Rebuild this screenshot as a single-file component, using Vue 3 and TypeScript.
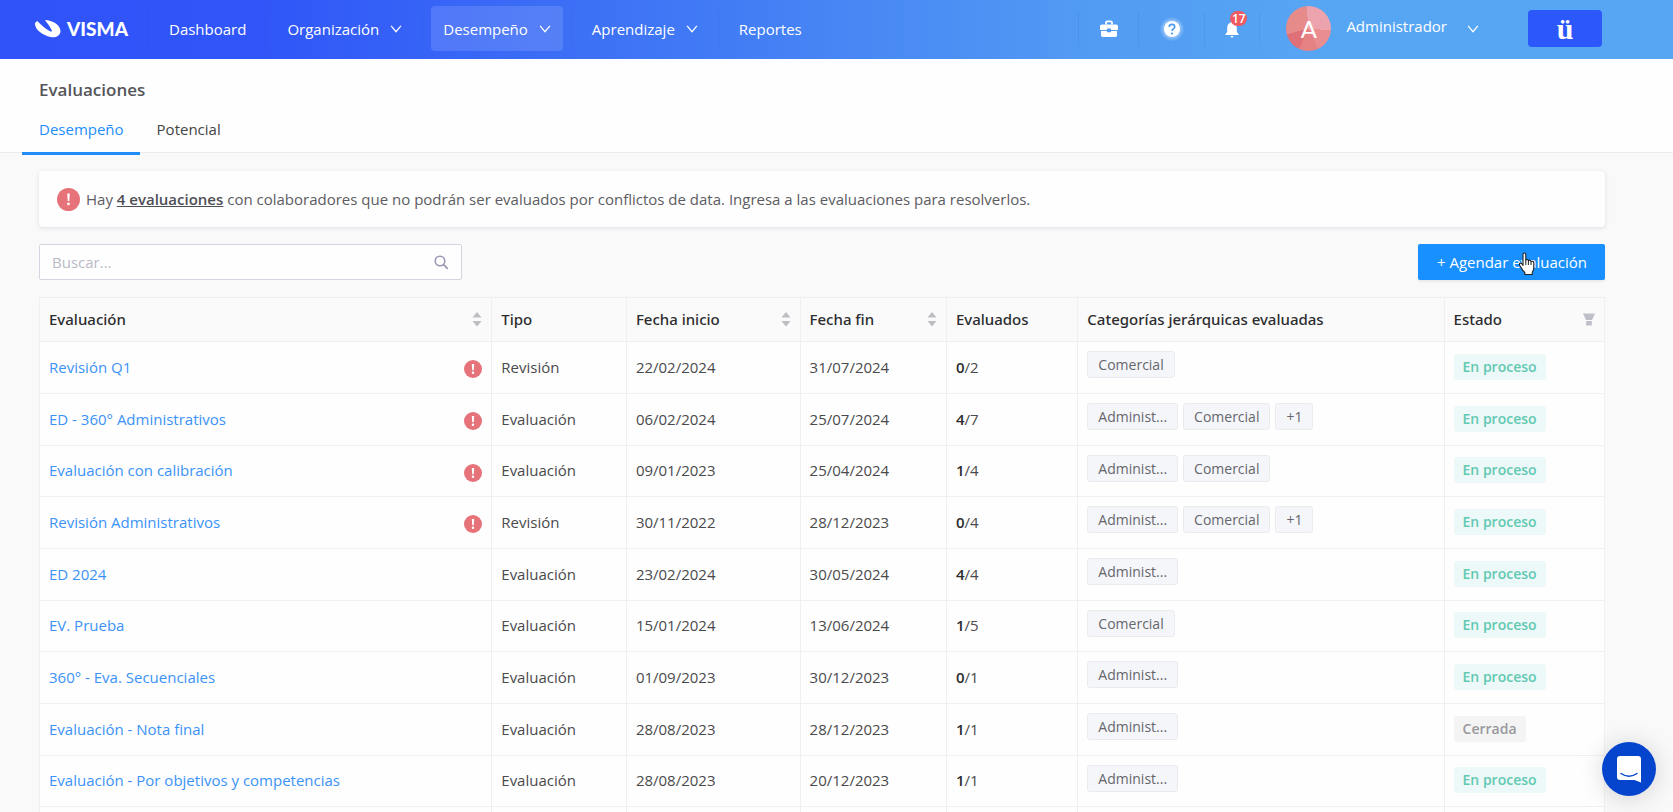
<script setup lang="ts">
import { ref } from 'vue'

interface NavItem { label: string; menu: boolean; active?: boolean }
interface Row {
  name: string
  alert: boolean
  kind: string
  start: string
  end: string
  done: number
  total: number
  tags: string[]
  open: boolean
}

const navItems: NavItem[] = [
  { label: 'Dashboard', menu: false },
  { label: 'Organización', menu: true },
  { label: 'Desempeño', menu: true, active: true },
  { label: 'Aprendizaje', menu: true },
  { label: 'Reportes', menu: false },
]

const columns = [
  { label: 'Evaluación', key: 'name', sort: true, filter: false },
  { label: 'Tipo', key: 'kind', sort: false, filter: false },
  { label: 'Fecha inicio', key: 'start', sort: true, filter: false },
  { label: 'Fecha fin', key: 'end', sort: true, filter: false },
  { label: 'Evaluados', key: 'count', sort: false, filter: false },
  { label: 'Categorías jerárquicas evaluadas', key: 'tags', sort: false, filter: false },
  { label: 'Estado', key: 'state', sort: false, filter: true },
]

const A = 'Administ...'
const C = 'Comercial'
const rows: Row[] = [
  { name: 'Revisión Q1', alert: true, kind: 'Revisión', start: '22/02/2024', end: '31/07/2024', done: 0, total: 2, tags: [C], open: true },
  { name: 'ED - 360° Administrativos', alert: true, kind: 'Evaluación', start: '06/02/2024', end: '25/07/2024', done: 4, total: 7, tags: [A, C, '+1'], open: true },
  { name: 'Evaluación con calibración', alert: true, kind: 'Evaluación', start: '09/01/2023', end: '25/04/2024', done: 1, total: 4, tags: [A, C], open: true },
  { name: 'Revisión Administrativos', alert: true, kind: 'Revisión', start: '30/11/2022', end: '28/12/2023', done: 0, total: 4, tags: [A, C, '+1'], open: true },
  { name: 'ED 2024', alert: false, kind: 'Evaluación', start: '23/02/2024', end: '30/05/2024', done: 4, total: 4, tags: [A], open: true },
  { name: 'EV. Prueba', alert: false, kind: 'Evaluación', start: '15/01/2024', end: '13/06/2024', done: 1, total: 5, tags: [C], open: true },
  { name: '360° - Eva. Secuenciales', alert: false, kind: 'Evaluación', start: '01/09/2023', end: '30/12/2023', done: 0, total: 1, tags: [A], open: true },
  { name: 'Evaluación - Nota final', alert: false, kind: 'Evaluación', start: '28/08/2023', end: '28/12/2023', done: 1, total: 1, tags: [A], open: false },
  { name: 'Evaluación - Por objetivos y competencias', alert: false, kind: 'Evaluación', start: '28/08/2023', end: '20/12/2023', done: 1, total: 1, tags: [A], open: true },
]

const search = ref('')
</script>

<template>
  <div class="page">
    <header class="topbar">
      <a class="brand" href="#">
        <svg width="26" height="18" viewBox="0 0 26 18" aria-hidden="true">
          <path fill="#fff" d="M10 0 C17 0 26 5 25.500 11.500 C25 16 20.500 18 15.500 17 C8 15.500 0 9.500 0 4 C0 2.500 1 1.500 2.500 1.200 C6 5 10.500 9 15 11.300 C16.300 11.900 17.200 11.500 16.800 10.500 C15.500 7 12.500 3.500 10 0 Z" />
        </svg>
        <span class="brand-name">VISMA</span>
      </a>
      <nav class="nav">
        <a v-for="n in navItems" :key="n.label" href="#" class="nav-item">
          <span class="nav-pill" :class="{ active: n.active }">
            {{ n.label }}
            <svg v-if="n.menu" class="chev" width="12" height="8" viewBox="0 0 13 9" aria-hidden="true">
              <path d="M1 1 L6.500 7.500 L12 1" fill="none" stroke="#fff" stroke-width="1.400" />
            </svg>
          </span>
        </a>
      </nav>
      <div class="tools">
        <button class="tool" aria-label="Portafolio">
          <svg width="18" height="18" viewBox="0 0 18 20" preserveAspectRatio="none" aria-hidden="true">
            <path d="M6 5 V3 Q6 1.500 7.500 1.500 H10.500 Q12 1.500 12 3 V5" fill="none" stroke="#fff" stroke-width="1.800" />
            <path fill="#fff" d="M2 5 H16 Q18 5 18 7 V11 H11 V9.500 H7 V11 H0 V7 Q0 5 2 5 Z M1 12.200 H7 V13.500 H11 V12.200 H17 V17 Q17 19 15.500 19 H2.500 Q1 19 1 17 Z" />
          </svg>
        </button>
        <button class="tool wide" aria-label="Ayuda">
          <svg width="24" height="24" viewBox="0 0 24 24" aria-hidden="true">
            <circle cx="12" cy="12" r="11.500" fill="#fff" opacity="0.150" />
            <circle cx="12" cy="12" r="9.800" fill="#fff" opacity="0.200" />
            <circle cx="12" cy="12" r="8" fill="#fff" />
            <path d="M9.300 10 Q9.300 7.300 12 7.300 Q14.700 7.300 14.700 9.800 Q14.700 11.300 13.200 12.100 Q12 12.800 12 14" fill="none" stroke="#4d9df3" stroke-width="1.700" />
            <circle cx="12" cy="16.500" r="1.100" fill="#4d9df3" />
          </svg>
        </button>
        <button class="tool bell" aria-label="Notificaciones">
          <svg width="14" height="18" viewBox="0 0 14 18" aria-hidden="true">
            <path fill="#fff" d="M7 1 Q8.200 1 8.200 2.400 Q11.800 3.500 11.800 8 V12 L13.500 14 V15 H0.500 V14 L2.200 12 V8 Q2.200 3.500 5.800 2.400 Q5.800 1 7 1 Z M5.400 16 H8.600 Q8.400 17.600 7 17.600 Q5.600 17.600 5.400 16 Z" />
          </svg>
          <span class="badge">17</span>
        </button>
        <button class="user">
          <span class="avatar">A</span>
          <span class="user-name">Administrador</span>
          <svg width="12" height="8" viewBox="0 0 13 9" aria-hidden="true">
            <path d="M1 1 L6.500 7.500 L12 1" fill="none" stroke="#fff" stroke-width="1.400" />
          </svg>
        </button>
        <button class="company">ü</button>
      </div>
    </header>

    <section class="subhead">
      <h1>Evaluaciones</h1>
      <nav class="tabs">
        <a href="#" class="tab active">Desempeño</a>
        <a href="#" class="tab">Potencial</a>
      </nav>
    </section>

    <main class="content">
      <div class="notice">
        <svg width="23" height="23" viewBox="0 0 20 20" aria-hidden="true">
          <circle cx="10" cy="10" r="10" fill="#e57379" />
          <path d="M8.900 4.800 H11.100 L10.700 11.400 H9.300 Z" fill="#fff" />
          <circle cx="10" cy="13.900" r="1.200" fill="#fff" />
        </svg>
        <p>Hay <a href="#">4 evaluaciones</a> con colaboradores que no podrán ser evaluados por conflictos de data. Ingresa a las evaluaciones para resolverlos.</p>
      </div>

      <div class="actions">
        <label class="search">
          <input v-model="search" type="text" placeholder="Buscar..." aria-label="Buscar" />
          <svg width="15" height="15" viewBox="0 0 15 15" aria-hidden="true">
            <circle cx="6" cy="6" r="4.800" fill="none" stroke="#9a97b5" stroke-width="1.600" />
            <path d="M9.600 9.600 L13.800 13.800" stroke="#9a97b5" stroke-width="1.700" />
          </svg>
        </label>
        <button class="primary">
          + Agendar evaluación
          <svg class="pointer" width="19" height="24" viewBox="0 0 19 24" aria-hidden="true">
            <path d="M5 2.500 Q5 1 6.400 1 Q7.800 1 7.800 2.500 V8.500 Q8 7.400 9.200 7.500 Q10.400 7.600 10.400 9 Q10.800 8 11.900 8.200 Q13 8.400 13 9.800 Q13.500 9 14.600 9.300 Q15.800 9.600 15.800 11 V15.500 Q15.800 18 14.300 20 V22.500 H6.800 V20.500 Q4.500 18.500 3.200 15.800 L1.600 13.200 Q1 11.800 2.100 11.300 Q3.200 10.900 4 12 L5 13.400 Z" fill="#fff" stroke="#222" stroke-width="1.100" stroke-linejoin="round" />
            <path d="M7.800 8.500 V13 M10.400 9 V13 M13 9.800 V13" stroke="#222" stroke-width="1" />
          </svg>
        </button>
      </div>

      <table class="grid">
        <colgroup>
          <col v-for="c in columns" :key="c.key" :class="'c-' + c.key" />
        </colgroup>
        <thead>
          <tr>
            <th v-for="c in columns" :key="c.key" scope="col">
              <div class="cell">
                <span>{{ c.label }}</span>
                <svg v-if="c.sort" class="sort" width="10" height="15" viewBox="0 0 10 15" aria-hidden="true">
                  <path d="M5 0 L9.500 5.500 H0.500 Z M0.500 9 H9.500 L5 14.500 Z" fill="#bdbdc2" />
                </svg>
                <svg v-if="c.filter" width="12" height="13" viewBox="0 0 12 13" aria-hidden="true">
                  <path d="M0 0.500 H12 L9 7 H3 Z M3.200 8 H8.800 V12.500 H3.200 Z" fill="#bfbfc9" />
                </svg>
              </div>
            </th>
          </tr>
        </thead>
        <tbody>
          <tr v-for="r in rows" :key="r.name">
            <td>
              <div class="cell">
                <a href="#">{{ r.name }}</a>
                <svg v-if="r.alert" class="alert" width="18" height="18" viewBox="0 0 20 20" aria-hidden="true">
                  <circle cx="10" cy="10" r="10" fill="#e57379" />
                  <path d="M8.700 4.500 H11.300 L10.900 11.400 H9.100 Z" fill="#fff" />
                  <circle cx="10" cy="14.200" r="1.400" fill="#fff" />
                </svg>
              </div>
            </td>
            <td>{{ r.kind }}</td>
            <td>{{ r.start }}</td>
            <td>{{ r.end }}</td>
            <td><b>{{ r.done }}</b>/{{ r.total }}</td>
            <td>
              <div class="tags">
                <span v-for="t in r.tags" :key="t" class="tag">{{ t }}</span>
              </div>
            </td>
            <td><span class="state" :class="{ closed: !r.open }">{{ r.open ? 'En proceso' : 'Cerrada' }}</span></td>
          </tr>
          <tr aria-hidden="true">
            <td v-for="c in columns" :key="c.key"></td>
          </tr>
        </tbody>
      </table>
    </main>

    <button class="chat" aria-label="Chat">
      <svg width="26" height="28" viewBox="0 0 26 28" aria-hidden="true">
        <path d="M4 1 H22 Q25 1 25 4 V27.500 L18.500 25 H4 Q1 25 1 22 V4 Q1 1 4 1 Z" fill="#fff" />
        <path d="M5 18.500 Q13 24 21 18.500" fill="none" stroke="#0545cd" stroke-width="1.500" stroke-linecap="round" />
      </svg>
    </button>
  </div>
</template>

<style>
body {
  margin: 0;
  background: #f9f9fa;
}
</style>

<style scoped>
.page {
  height: 100vh;
  overflow: hidden;
  background: #f9f9fa;
  color: #4a4a4c;
  font-family: "Open Sans", "Noto Sans", sans-serif;
  font-size: 15px;
  line-height: 22px;
}
a {
  color: inherit;
  text-decoration: none;
}
button {
  border: 0;
  padding: 0;
  background: none;
  color: inherit;
  font: inherit;
  cursor: pointer;
}
.topbar {
  display: flex;
  align-items: center;
  height: 59px;
  padding: 0 71px 2px 35px;
  box-sizing: border-box;
  color: #fff;
  background: linear-gradient(90deg, #2f53f9 0%, #3055f8 15%, #417af5 42%, #529bf3 65%, #57a6f3 80%, #57a6f3 100%);
}
.brand {
  display: flex;
  align-items: center;
  gap: 6px;
  width: 113px;
}
.brand-name {
  font-family: Lato, sans-serif;
  font-size: 19px;
  font-weight: 900;
}
.nav {
  display: flex;
}
.nav-item {
  display: flex;
  align-items: center;
  height: 34px;
  padding: 0 8px;
  border-left: 1px solid rgba(20, 50, 160, 0.080);
}
.nav-pill {
  display: flex;
  align-items: center;
  gap: 11px;
  height: 45px;
  padding: 0 12px;
  border-radius: 4px;
}
.nav-pill.active {
  background: rgba(255, 255, 255, 0.130);
}
.tools {
  display: flex;
  align-items: center;
  margin-left: auto;
}
.tool {
  display: flex;
  align-items: center;
  justify-content: center;
  position: relative;
  width: 60px;
  height: 34px;
  border-left: 1px solid rgba(20, 50, 160, 0.080);
}
.tool.wide {
  width: 66px;
}
.tool.bell {
  width: 56px;
  border-right: 1px solid rgba(20, 50, 160, 0.080);
}
.badge {
  position: absolute;
  left: 25px;
  top: -1px;
  min-width: 17px;
  height: 15px;
  border-radius: 8px;
  background: #ee5a60;
  font-size: 12px;
  font-weight: 600;
  line-height: 15px;
}
.user {
  display: flex;
  align-items: center;
  padding: 0 49px 0 26px;
}
.avatar {
  width: 45px;
  height: 45px;
  margin-right: 15px;
  border-radius: 50%;
  background: conic-gradient(#eda3ad 0deg 95deg, #e98d90 95deg 155deg, #e58083 155deg 205deg, #df7077 205deg 255deg, #e78b8a 255deg 355deg, #eda3ad 355deg);
  font-family: Lato, sans-serif;
  font-size: 24px;
  line-height: 45px;
}
.user-name {
  margin: 0 20px 5px 0;
}
.company {
  width: 74px;
  height: 37px;
  border-radius: 4px;
  background: #2b57fb;
  font-family: "Liberation Serif", serif;
  font-size: 30px;
  font-weight: 700;
  line-height: 34px;
}
.subhead {
  padding: 20px 22px 0;
  border-bottom: 1px solid #ebe8ee;
  background: #fefefe;
}
h1 {
  margin: 0 0 10px 17px;
  color: #55555a;
  font-size: 17px;
  font-weight: 600;
  line-height: 22px;
}
.tabs {
  display: flex;
  height: 41px;
}
.tab {
  height: 41px;
  padding: 0 16px 0 17px;
  border-bottom: 3px solid transparent;
  color: #444;
  line-height: 36px;
}
.tab.active {
  border-color: #1f8efc;
  color: #1f8efc;
}
.content {
  padding: 18px 68px 0 39px;
}
.notice {
  display: flex;
  align-items: center;
  gap: 6px;
  height: 56px;
  padding: 0 18px;
  border-radius: 4px;
  background: #fefefe;
  box-shadow: 0 1px 4px rgba(30, 30, 70, 0.120);
  color: #5c5c62;
}
.notice p {
  margin: 0;
}
.notice a {
  color: #4e4e56;
  font-weight: 600;
  text-decoration: underline;
}
.actions {
  display: flex;
  justify-content: space-between;
  margin: 17px 0;
}
.search {
  display: flex;
  align-items: center;
  width: 27%;
  height: 36px;
  padding: 0 12px;
  box-sizing: border-box;
  border: 1px solid #d6d5df;
  border-radius: 2px;
  background: #fefefe;
}
.search input {
  flex: 1;
  min-width: 0;
  border: 0;
  padding: 0;
  outline: 0;
  background: none;
  color: #444;
  font: inherit;
}
.search input::placeholder {
  color: #bcbac6;
}
.primary {
  position: relative;
  height: 36px;
  padding: 0 18px 0 19px;
  border-radius: 2px;
  background: #1890ff;
  box-shadow: 0 2px 2px rgba(0, 0, 0, 0.060);
  color: #fff;
}
.pointer {
  position: absolute;
  right: 68px;
  top: 8px;
}
.grid {
  width: 100%;
  border: 1px solid #efeff3;
  border-width: 1px 0 0 1px;
  border-spacing: 0;
  table-layout: fixed;
}
.c-name { width: 28.900%; }
.c-kind { width: 8.600%; }
.c-start { width: 11.100%; }
.c-end { width: 9.350%; }
.c-count { width: 8.400%; }
.c-tags { width: 23.400%; }
.c-state { width: 10.250%; }
th,
td {
  box-sizing: border-box;
  padding: 0 9px 1px;
  border: 1px solid #f0f0f3;
  border-width: 0 1px 1px 0;
  text-align: left;
  white-space: nowrap;
}
th {
  height: 44px;
  background: #fafafa;
  color: #2c2c2e;
  font-family: "Noto Sans", "Open Sans", sans-serif;
  font-weight: 500;
}
td {
  height: 52px;
  padding-bottom: 2px;
  background: #fefefe;
}
tr:nth-child(3n) td {
  height: 51px;
}
.cell {
  display: flex;
  align-items: center;
  justify-content: space-between;
}
.cell a {
  color: #3b93f7;
}
td b {
  color: #2c2c2e;
  font-weight: 600;
}
.alert {
  margin-top: 5px;
}
.tags {
  display: flex;
  gap: 5px;
  margin-bottom: 4px;
}
.tag,
.state {
  display: inline-block;
  padding: 0 9px;
  border-radius: 3px;
  font-size: 14px;
  line-height: 26px;
}
.tag {
  padding: 0 10px;
  border: 1px solid #ebebef;
  background: #f5f6fa;
  color: #66666c;
  line-height: 25px;
}
.state {
  background: #edf8f8;
  color: #62c9b2;
  font-weight: 600;
}
.state.closed {
  background: #f4f4f5;
  color: #98989c;
}
.chat {
  display: flex;
  align-items: center;
  justify-content: center;
  position: fixed;
  right: 17px;
  bottom: 16px;
  width: 54px;
  height: 54px;
  border-radius: 50%;
  background: #0545cd;
  box-shadow: 0 2px 24px rgba(0, 0, 0, 0.160);
}
</style>
